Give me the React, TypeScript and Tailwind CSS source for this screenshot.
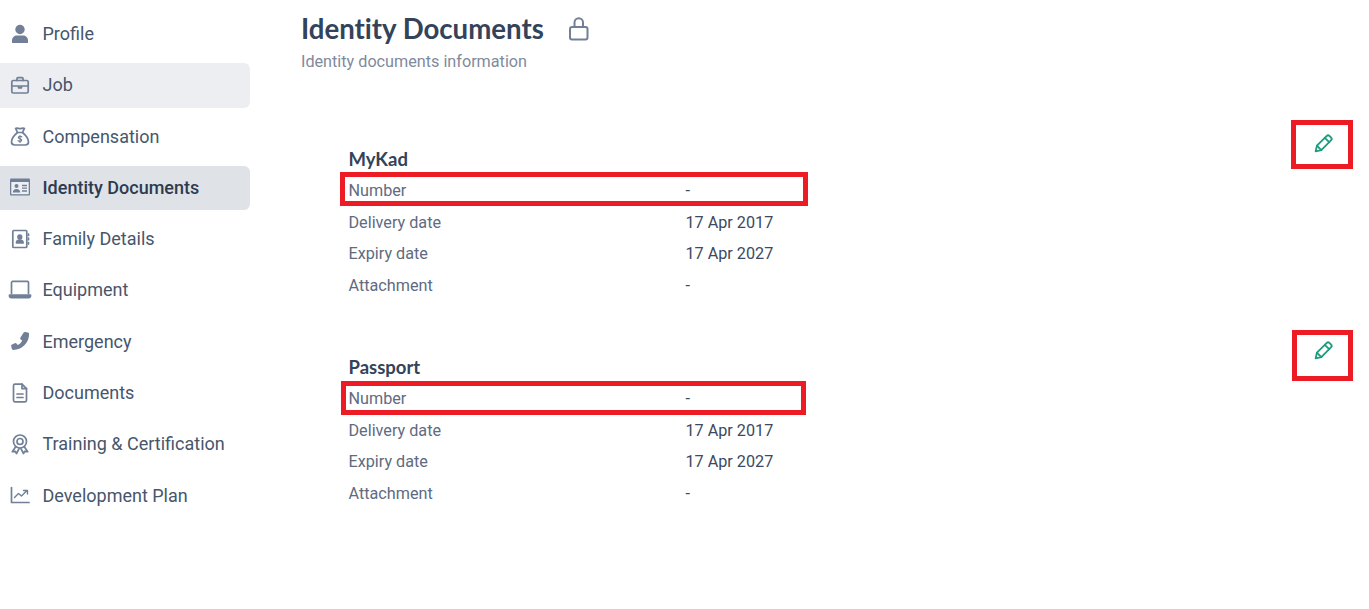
import type { ReactNode } from "react";

const Svg = ({ children, filled }: { children: ReactNode; filled?: boolean }) => (
  <svg
    viewBox="0 0 24 24"
    width={24}
    height={24}
    fill={filled ? "#718096" : "none"}
    stroke={filled ? "none" : "#718096"}
    strokeWidth={1.7}
    strokeLinecap="round"
    strokeLinejoin="round"
  >
    {children}
  </svg>
);

const navItems: { label: string; bg?: string; bold?: boolean; icon: ReactNode }[] = [
  {
    label: "Profile",
    icon: (
      <Svg filled>
        <circle cx="12" cy="7.500" r="4.700" />
        <path d="M4 21v-2.500C4 15.500 6.300 13.500 9 13.500h6c2.700 0 5 2 5 5V21z" />
      </Svg>
    ),
  },
  {
    label: "Job",
    bg: "bg-[#edeef1]",
    icon: (
      <Svg>
        <rect x="3.800" y="7.500" width="16.400" height="12.500" rx="1.500" />
        <path d="M9 7.500V5.600c0-.5.4-.9.9-.9h4.200c.5 0 .9.4.9.9v1.900M3.800 13h16.400M10.500 13v1.800h3V13" />
      </Svg>
    ),
  },
  {
    label: "Compensation",
    icon: (
      <Svg>
        <path d="M9.500 8.500 7.600 4.400c1.400-1 2.900.3 4.400.3s3-1.300 4.400-.3L14.500 8.500z" />
        <path d="M9.500 8.500C6.500 11 3.500 15 3.500 18c0 2 1.400 3 3.500 3h10c2.100 0 3.500-1 3.500-3 0-3-3-7-6-9.500" />
        <path strokeWidth={1.2} d="M13.800 12.800c-.5-.7-3.300-1-3.500.6-.2 1.700 3.500 1 3.400 2.800-.1 1.500-2.900 1.300-3.700.4M12 11.500v7" />
      </Svg>
    ),
  },
  {
    label: "Identity Documents",
    bg: "bg-[#dfe2e6]",
    bold: true,
    icon: (
      <svg viewBox="0 0 24 24" width={24} height={24}>
        <rect x="2" y="3.500" width="20" height="17" rx="1" fill="#718096" />
        <rect x="3.300" y="7" width="17.400" height="12.200" fill="#edf0f3" />
        <circle cx="8.500" cy="11" r="2" fill="#718096" />
        <path d="M4.800 17.500c0-2.300 1.400-3.500 3.700-3.500s3.700 1.200 3.700 3.500z" fill="#718096" />
        <path d="M14 10.500h5M14 13.200h5M14 16h5" stroke="#718096" strokeWidth="1.300" />
      </svg>
    ),
  },
  {
    label: "Family Details",
    icon: (
      <Svg>
        <rect x="4.800" y="3.500" width="14" height="17" rx="1" />
        <circle cx="11.800" cy="10" r="1.800" fill="#718096" />
        <path fill="#718096" d="M8.500 16c0-2 1.300-2.800 3.300-2.800s3.300.8 3.300 2.800z" />
        <path d="M20.500 7v1.500M20.500 11.200v1.500M20.500 15.500V17" />
      </Svg>
    ),
  },
  {
    label: "Equipment",
    icon: (
      <Svg>
        <path d="M3.500 15.500V4.600c0-.7.500-1.200 1.200-1.200h14.600c.7 0 1.200.5 1.200 1.200v10.900" />
        <path fill="#718096" d="M1.500 17h21v.7c0 1.100-1 1.900-2 1.900h-17c-1 0-2-.8-2-1.900z" />
      </Svg>
    ),
  },
  {
    label: "Emergency",
    icon: (
      <Svg filled>
        <path d="M15.500 3.800c.4-.7 1.100-1 1.800-.8l2.600.6c.7.2 1.200.8 1.200 1.500C21.100 14 13.900 21 5.300 21c-.7 0-1.300-.5-1.500-1.200l-.6-2.600c-.2-.7.100-1.400.8-1.800l2.800-1.200c.6-.3 1.300-.1 1.700.4l1.200 1.500c2-1 3.500-2.500 4.500-4.500l-1.500-1.200c-.5-.4-.7-1.100-.4-1.700z" />
      </Svg>
    ),
  },
  {
    label: "Documents",
    icon: (
      <Svg>
        <path d="M14 3.200H7c-.9 0-1.500.6-1.500 1.500v14.600c0 .9.600 1.500 1.500 1.500h10c.9 0 1.500-.6 1.500-1.500V7.700z" />
        <path d="M14 3.200v4.500h4.500M9 13h6M9 16.500h6" />
      </Svg>
    ),
  },
  {
    label: "Training & Certification",
    icon: (
      <Svg>
        <circle cx="12" cy="9.500" r="6.500" />
        <circle cx="12" cy="9.500" r="3" />
        <path d="m7.500 15-3.200 4.700 3-.4 1.200 2.200 2.600-4.800M16.500 15l3.200 4.700-3-.4-1.200 2.200-2.600-4.800" />
      </Svg>
    ),
  },
  {
    label: "Development Plan",
    icon: (
      <Svg>
        <path d="M3.500 4.500V19.500h17.500" />
        <path d="m6.500 14.500 4-4 3 2.500 5.500-5.500M15.500 7.500H19.500V11" strokeWidth={1.4} />
      </Svg>
    ),
  },
];

const rows = [
  { label: "Number", value: "-" },
  { label: "Delivery date", value: "17 Apr 2017" },
  { label: "Expiry date", value: "17 Apr 2027" },
  { label: "Attachment", value: "-" },
];

const Pencil = () => (
  <svg viewBox="0 0 24 24" width={21} height={21} fill="none" stroke="#1f9b7f" strokeWidth={2.1} strokeLinecap="round" strokeLinejoin="round">
    <path d="M3 21l1.500-6.500L15.500 3.500c1-1 2.500-1 3.500 0l1.500 1.500c1 1 1 2.500 0 3.500L9.500 19.500z" />
    <path d="M13.500 5.500l5 5M4.500 14.500l5 5" />
  </svg>
);

const Section = ({
  title,
  className,
  boxClass,
  editClass,
}: {
  title: string;
  className: string;
  boxClass: string;
  editClass: string;
}) => (
  <section className={`flex justify-between items-start ${className}`}>
    <div className="pl-[47.5px] w-[760px]">
      <h3 className="h-[32px] flex items-center text-[18.5px] font-bold text-[#33435a] font-['Lato',sans-serif]">
        {title}
      </h3>
      {rows.map((r, i) => (
        <div key={r.label} className="relative h-[31.6px] flex items-center text-[16.2px]">
          <span className="w-[337px] text-[#5f6b7f]">{r.label}</span>
          <span className="text-[#3b4a60]">{r.value}</span>
          {i == 0 && <div className={`absolute border-[5px] border-[#ed1c24] ${boxClass}`} />}
        </div>
      ))}
    </div>
    <button className="relative w-8 h-8 flex items-center justify-center">
      <Pencil />
      <div className={`absolute border-[5px] border-[#ed1c24] ${editClass}`} />
    </button>
  </section>
);

export default function App() {
  return (
    <div className="flex h-[609px] bg-white font-['Roboto',sans-serif] overflow-hidden">
      <nav className="w-[250px] shrink-0 pt-[11.7px]">
        {navItems.map((item) => (
          <a
            key={item.label}
            className={`flex items-center gap-[10.5px] h-[44.6px] mb-[6.7px] pl-2 pb-[0.8px] rounded-r-md text-[18px] ${
              item.bold ? "font-medium text-[#2d3b50]" : "text-[#46566c]"
            } ${item.bg ?? ""}`}
          >
            {item.icon}
            {item.label}
          </a>
        ))}
      </nav>
      <main className="grow pl-[51px] pr-[30px] pt-[12px]">
        <div className="flex items-center gap-[23px] h-[34px]">
          <h1 className="text-[27.6px] font-bold text-[#33435a] font-['Lato',sans-serif] [font-variant-ligatures:none]">
            Identity Documents
          </h1>
          <svg viewBox="0 0 24 24" width={24} height={24} fill="none" stroke="#718096" strokeWidth={2} strokeLinecap="round" strokeLinejoin="round">
            <rect x="3" y="10" width="17.500" height="12.500" rx="2" />
            <path d="M7.500 10V5.500a4.250 4.250 0 0 1 8.500 0V10" />
          </svg>
        </div>
        <p className="mt-[4px] text-[16.2px] leading-[24px] text-[#7f8a9c]">Identity documents information</p>
        <Section
          title="MyKad"
          className="mt-[53px] [&_h3]:mt-[16.500px]"
          boxClass="-left-[8.500px] -top-[3.500px] w-[468px] h-[34px]"
          editClass="-left-[16px] -top-[7px] w-[62px] h-[49px]"
        />
        <Section
          title="Passport"
          className="mt-[32.500px] [&_h3]:mt-[17px]"
          boxClass="-left-[7.500px] -top-[2px] w-[465px] h-[34px]"
          editClass="-left-[15px] -top-[4px] w-[61px] h-[51px]"
        />
      </main>
    </div>
  );
}
